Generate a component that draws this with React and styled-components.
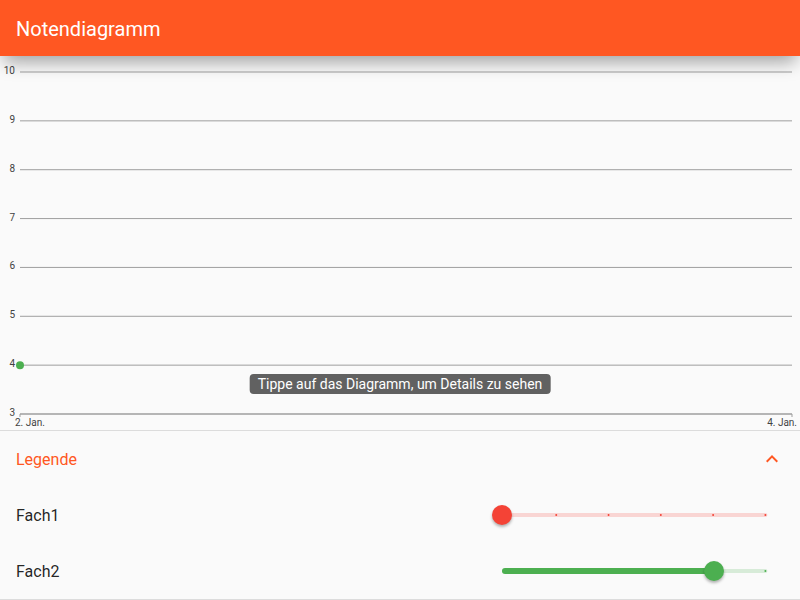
import React, { useState } from "react";
import styled, { createGlobalStyle } from "styled-components";

const GlobalStyle = createGlobalStyle`
  * { box-sizing: border-box; }
  body {
    margin: 0;
    background: #fafafa;
    color: rgba(0, 0, 0, 0.87);
    font-family: Roboto, sans-serif;
    font-size: 16px;
  }
`;

const Page = styled.div`
  display: flex;
  flex-direction: column;
  min-height: 100vh;
`;

const AppBar = styled.header`
  display: flex;
  align-items: center;
  height: 56px;
  padding: 2px 16px 0;
  background: #ff5722;
  color: #fff;
  box-shadow: 0 10px 18px -4px rgba(0, 0, 0, 0.36);
  z-index: 1;
`;

const Title = styled.h1`
  margin: 0;
  font-size: 20px;
  line-height: 24px;
  font-weight: 400;
`;

const ChartArea = styled.main`
  position: relative;
  display: flex;
  flex: 1;
  min-height: 240px;
  padding: 16px 8px 16px 20px;
`;

const Plot = styled.svg`
  flex: 1;
  min-width: 0;
  overflow: visible;
  font-size: 10px;
  fill: #424242;
`;

const Hint = styled.div`
  position: absolute;
  left: 50%;
  bottom: 36px;
  transform: translateX(-50%);
  padding: 0 8px;
  border-radius: 4px;
  background: #616161;
  color: #fff;
  font-size: 14px;
  line-height: 20px;
  white-space: nowrap;
`;

const Legend = styled.section`
  border: solid #dcdcdc;
  border-width: 1px 0;
`;

const LegendHeader = styled.button`
  display: flex;
  align-items: center;
  justify-content: space-between;
  width: 100%;
  height: 56px;
  padding: 0 16px;
  border: 0;
  background: none;
  color: #ff5722;
  font: inherit;
  cursor: pointer;
`;

const Chevron = styled.svg`
  width: 24px;
  height: 24px;
  fill: currentColor;
  transform: ${(p) => (p.$open ? "none" : "rotate(180deg)")};
`;

const SubjectRow = styled.div`
  display: flex;
  align-items: center;
  justify-content: space-between;
  height: 56px;
  padding: 0 23px 0 16px;
`;

const SliderBox = styled.div`
  position: relative;
  display: flex;
  flex: 0 0 37.5%;
  height: 20px;
`;

const Track = styled.svg`
  position: absolute;
  left: 10px;
  top: 0;
  width: calc(100% - 20px);
  height: 20px;
  overflow: visible;
  fill: ${(p) => p.$color};
`;

const Ticks = styled.svg`
  width: calc(100% - 4px);
  height: 20px;
  overflow: visible;
`;

const Range = styled.input`
  position: relative;
  width: 100%;
  height: 20px;
  margin: 0;
  appearance: none;
  background: transparent;
  cursor: pointer;

  &::-webkit-slider-thumb {
    appearance: none;
    width: 20px;
    height: 20px;
    border-radius: 50%;
    background: ${(p) => p.$color};
    box-shadow: 0 2px 3px rgba(0, 0, 0, 0.3);
  }
  &::-moz-range-thumb {
    width: 20px;
    height: 20px;
    border: 0;
    border-radius: 50%;
    background: ${(p) => p.$color};
  }
`;

const grades = [10, 9, 8, 7, 6, 5, 4, 3];
const position = (grade) => `${((10 - grade) / 7) * 100}%`;

function GradeChart() {
  return (
    <ChartArea>
      <Plot role="img" aria-label="Notendiagramm">
        {grades.map((grade) => (
          <g key={grade}>
            <line x2="100%" y1={position(grade)} y2={position(grade)} stroke="#9e9e9e" />
            <text x="-5" y={position(grade)} dy="2" textAnchor="end">{grade}</text>
          </g>
        ))}
        <line x2="100%" y1="100%" y2="100%" stroke="#9e9e9e" />
        <svg y="100%" width="100%" height="3" overflow="visible">
          <line y2="3" stroke="#9e9e9e" />
          <line x1="100%" x2="100%" y2="3" stroke="#9e9e9e" />
        </svg>
        <text x="-5" y="100%" dy="12">2. Jan.</text>
        <text x="100%" y="100%" dx="5" dy="12" textAnchor="end">4. Jan.</text>
        <circle cy={position(4)} r="4" fill="#4caf50" />
      </Plot>
      <Hint>Tippe auf das Diagramm, um Details zu sehen</Hint>
    </ChartArea>
  );
}

function Subject({ id, name, color, initial }) {
  const [value, setValue] = useState(initial);
  const filled = `${value * 20}%`;
  const ticks = [1, 2, 3, 4, 5].filter((n) => n > value);
  return (
    <SubjectRow>
      <label htmlFor={id}>{name}</label>
      <SliderBox>
        <Track $color={color} aria-hidden="true">
          <rect y="8" width="100%" height="4" rx="2" opacity="0.2" />
          {value > 0 && <rect y="7" width={filled} height="6" rx="3" />}
          <Ticks x="2">
            {ticks.map((n) => <circle key={n} cx={`${n * 20}%`} cy="10" r="1" />)}
          </Ticks>
        </Track>
        <Range
          id={id}
          type="range"
          min="0"
          max="5"
          step="1"
          value={value}
          $color={color}
          onChange={(e) => setValue(Number(e.target.value))}
        />
      </SliderBox>
    </SubjectRow>
  );
}

export default function App() {
  const [open, setOpen] = useState(true);
  return (
    <>
      <GlobalStyle />
      <Page>
        <AppBar><Title>Notendiagramm</Title></AppBar>
        <GradeChart />
        <Legend>
          <LegendHeader type="button" aria-expanded={open} onClick={() => setOpen(!open)}>
            Legende
            <Chevron $open={open} viewBox="0 0 24 24" aria-hidden="true">
              <path d="M12 8l-6 6 1.41 1.41L12 10.83l4.59 4.58L18 14z" />
            </Chevron>
          </LegendHeader>
          {open && (
            <>
              <Subject id="fach1" name="Fach1" color="#f44336" initial={0} />
              <Subject id="fach2" name="Fach2" color="#4caf50" initial={4} />
            </>
          )}
        </Legend>
      </Page>
    </>
  );
}
